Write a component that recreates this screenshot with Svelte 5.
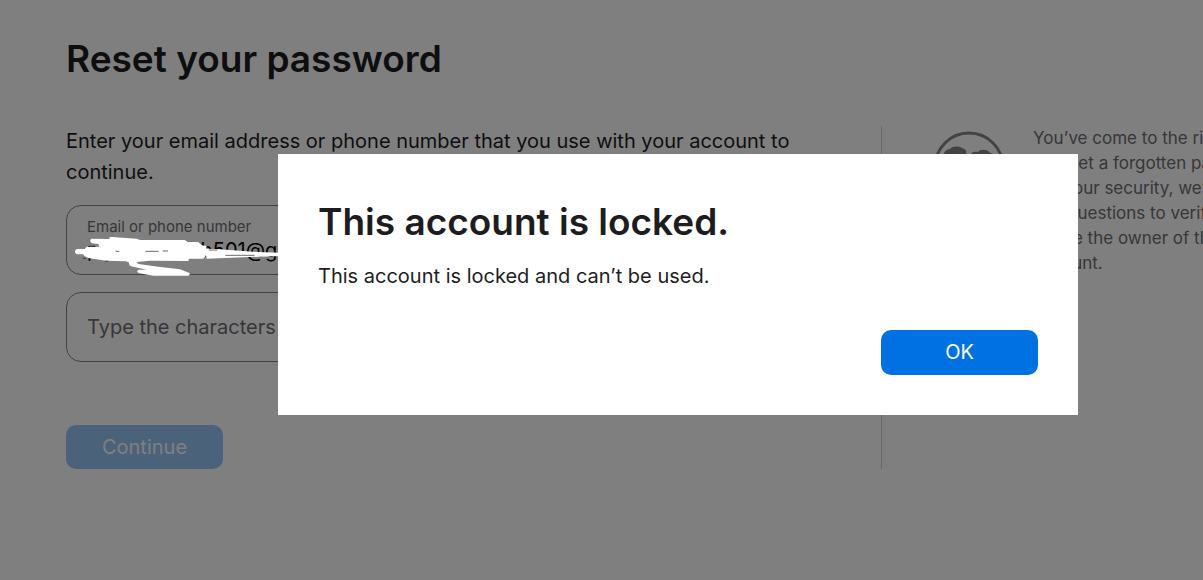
<script>
  // Form values
  let account = $state('p•••••••••b501@g');
  let captcha = $state('');

  // The dialog covers the form until it is dismissed
  let dialogOpen = $state(true);

  function closeDialog() {
    dialogOpen = false;
  }
</script>

<div class="page">
  <main class="content">
    <h1>Reset your password</h1>

    <div class="columns">
      <form class="form" onsubmit={(e) => e.preventDefault()}>
        <p class="intro">
          Enter your email address or phone number that you use with your account to continue.
        </p>

        <div class="field filled">
          <label for="account">Email or phone number</label>
          <input id="account" type="text" bind:value={account} />
        </div>

        <div class="field">
          <input
            type="text"
            aria-label="Type the characters in the image"
            placeholder="Type the characters in the image"
            bind:value={captcha}
          />
        </div>

        <button class="btn continue" type="submit" disabled>Continue</button>
      </form>

      <aside class="help">
        <!-- Globe icon -->
        <svg class="globe" viewBox="0 0 72 72" aria-hidden="true">
          <circle cx="36" cy="36" r="34" fill="none" stroke="currentColor" stroke-width="3" />
          <path
            d="M10 26c1-6 4-8 7-8 2-3 9-3 12-1 4 1 5 3 4 7l-6 9-7 3 2 8 7 6-5 13-6-3-3-12-8-8z"
            fill="currentColor"
          />
          <path
            d="M38 26c-1-4 2-6 7-5 2-3 10-3 12 1 3 0 4 2 4 4l4 13-5 12-7 7-5-11-9-5-4-9z"
            fill="currentColor"
          />
        </svg>
        <p class="help-text">
          You’ve come to the right place<br />
          to reset a forgotten password.<br />
          For your security, we’ll ask a<br />
          few questions to verify<br />
          you’re the owner of this<br />
          account.
        </p>
      </aside>
    </div>
  </main>
</div>

{#if dialogOpen}
  <div class="backdrop">
    <div class="dialog" role="alertdialog" aria-labelledby="dialog-title" aria-describedby="dialog-text">
      <h2 id="dialog-title">This account is locked.</h2>
      <p id="dialog-text">This account is locked and can’t be used.</p>
      <div class="actions">
        <button class="btn ok" type="button" onclick={closeDialog}>OK</button>
      </div>
    </div>
  </div>
{/if}

<!-- Marker strokes hiding the account name -->
<svg class="marker" viewBox="0 0 630 150" aria-hidden="true">
  <path
    d="M15 65Q15 57 24 57L44 57 50 50 88 50 85 42 66 40Q56 33 64 26L119 27Q114 20 126 21L200 26 210 30 345 30 352 36 385 36 395 46 410 48 408 56 440 57 560 66 630 68 630 78 410 86 408 76 400 86 357 86 355 93 240 92 200 96 205 102 265 110 330 118 358 129Q362 134 355 137L250 137 205 129Q198 122 206 119L230 119 183 109Q174 103 178 98L168 94 108 92 55 84 42 77 40 73 24 73Q15 72 15 65Z"
    fill="#ffffff"
  />
  <path
    d="M54 49l20-1M38 85h10M105 94l10-1M136 63l12 2M226 64h40M278 63h16M416 60h26M466 76h88"
    stroke="#222222"
    stroke-width="2"
    fill="none"
  />
</svg>

<style>
  :global(body) {
    overflow: hidden;
    background: #ffffff;
  }

  .page,
  .backdrop {
    font-family: Inter, 'Noto Sans', sans-serif;
    font-size: 20px;
    line-height: 31px;
    color: #1d1d1f;
  }

  .page {
    min-width: 1356px;
  }

  .content {
    max-width: 1224px;
    margin: 0 auto;
    padding: 34px 0;
  }

  h1,
  h2 {
    margin: 0;
    font-size: 37px;
    line-height: 50px;
    font-weight: 600;
  }

  p {
    margin: 0;
  }

  .columns {
    display: flex;
    margin-top: 42px;
  }

  .form {
    flex: none;
    width: 816px;
    box-sizing: border-box;
    padding-right: 56px;
    border-right: 1px solid #d2d2d7;
  }

  .intro {
    margin-bottom: 17px;
  }

  /* Text fields with a floating label */
  .field {
    display: flex;
    flex-direction: column;
    justify-content: center;
    box-sizing: border-box;
    height: 70px;
    margin-bottom: 17px;
    padding: 0 20px;
    border: 1px solid #86868b;
    border-radius: 15px;
  }

  .field label {
    font-size: 15px;
    line-height: 20px;
    color: #6e6e73;
  }

  .field input {
    width: 100%;
    padding: 0;
    border: none;
    outline: none;
    background: none;
    font: inherit;
    color: #000000;
  }

  .field input::placeholder {
    color: #6e6e73;
    opacity: 1;
  }

  .filled input {
    line-height: 26px;
  }

  /* Buttons */
  .btn {
    width: 157px;
    height: 45px;
    border: none;
    border-radius: 10px;
    font: inherit;
    color: #ffffff;
    cursor: pointer;
  }

  .continue {
    display: block;
    height: 44px;
    margin-top: 63px;
    background: #96c4f6;
    cursor: default;
  }

  .ok {
    background: #0071e3;
  }

  /* Side help */
  .help {
    display: flex;
    flex: 1;
    align-items: flex-start;
    gap: 28px;
    padding-left: 51px;
    color: #86868b;
  }

  .globe {
    flex: none;
    width: 72px;
    height: 72px;
    margin-top: 5px;
  }

  .help-text {
    flex: none;
    font-size: 17px;
    line-height: 25px;
    color: #6e6e73;
  }

  /* Dialog */
  .backdrop {
    position: absolute;
    top: 0;
    left: 0;
    display: flex;
    justify-content: center;
    align-items: flex-start;
    box-sizing: border-box;
    width: 100%;
    min-width: 1356px;
    height: 100vh;
    padding-top: 154px;
    background: rgba(0, 0, 0, 0.5);
  }

  .dialog {
    box-sizing: border-box;
    width: 800px;
    padding: 43px 40px 40px;
    background: #ffffff;
  }

  .dialog p {
    margin-top: 14px;
  }

  .actions {
    display: flex;
    justify-content: flex-end;
    margin-top: 38px;
  }

  .marker {
    position: absolute;
    top: 230px;
    left: 70px;
    width: 210px;
    height: 50px;
  }
</style>
